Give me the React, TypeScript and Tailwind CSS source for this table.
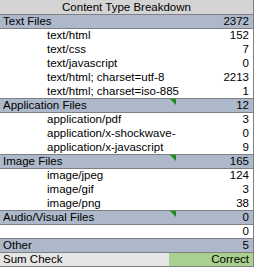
import React from 'react';

type Row = {
  label: string;
  value: string;
  kind: 'section' | 'item' | 'blank';
  flag?: boolean;
};

const rows: Row[] = [
  { label: 'Text Files', value: '2372', kind: 'section' },
  { label: 'text/html', value: '152', kind: 'item' },
  { label: 'text/css', value: '7', kind: 'item' },
  { label: 'text/javascript', value: '0', kind: 'item' },
  { label: 'text/html; charset=utf-8', value: '2213', kind: 'item' },
  { label: 'text/html; charset=iso-885', value: '1', kind: 'item' },
  { label: 'Application Files', value: '12', kind: 'section', flag: true },
  { label: 'application/pdf', value: '3', kind: 'item' },
  { label: 'application/x-shockwave-', value: '0', kind: 'item' },
  { label: 'application/x-javascript', value: '9', kind: 'item' },
  { label: 'Image Files', value: '165', kind: 'section', flag: true },
  { label: 'image/jpeg', value: '124', kind: 'item' },
  { label: 'image/gif', value: '3', kind: 'item' },
  { label: 'image/png', value: '38', kind: 'item' },
  { label: 'Audio/Visual Files', value: '0', kind: 'section', flag: true },
  { label: '', value: '0', kind: 'blank' },
  { label: 'Other', value: '5', kind: 'section' },
];

function Flag() {
  return (
    <span className="absolute left-[170px] top-0 w-0 h-0 border-t-[6px] border-t-[#1a8a1a] border-l-[6px] border-l-transparent" />
  );
}

export default function App() {
  return (
    <div
      className="w-[255px] h-[268px] bg-white text-[11.5px] leading-[13px] text-black overflow-hidden"
      style={{ fontFamily: '"Liberation Sans", Arial, sans-serif' }}
    >
      <div className="border-r border-[#808080] w-[254px]">
        <div className="h-[15px] bg-[#d4d4d4] border-b border-[#808080] flex items-center justify-center">
          Content Type Breakdown
        </div>
        {rows.map((r, i) => {
          const next = rows[i + 1];
          const darkLine = r.kind === 'section' || !next || next.kind === 'section';
          return (
            <div
              key={i}
              className={
                'relative h-[14px] flex items-center border-b ' +
                (darkLine ? 'border-[#808080] ' : 'border-white ') +
                (r.kind === 'section' ? 'bg-[#adb9ca]' : 'bg-white')
              }
            >
              <span className={r.kind === 'section' ? 'pl-[3px] flex-1' : 'pl-[47px] flex-1'}>{r.label}</span>
              <span className="pr-[4px]">{r.value}</span>
              {r.flag && <Flag />}
            </div>
          );
        })}
        <div className="h-[14px] flex border-b border-[#808080]">
          <div className="w-[169px] bg-[#e6e6e6] pl-[3px] flex items-center">Sum Check</div>
          <div className="flex-1 bg-[#a9d08e] flex items-center justify-end pr-[4px]">Correct</div>
        </div>
      </div>
    </div>
  );
}
